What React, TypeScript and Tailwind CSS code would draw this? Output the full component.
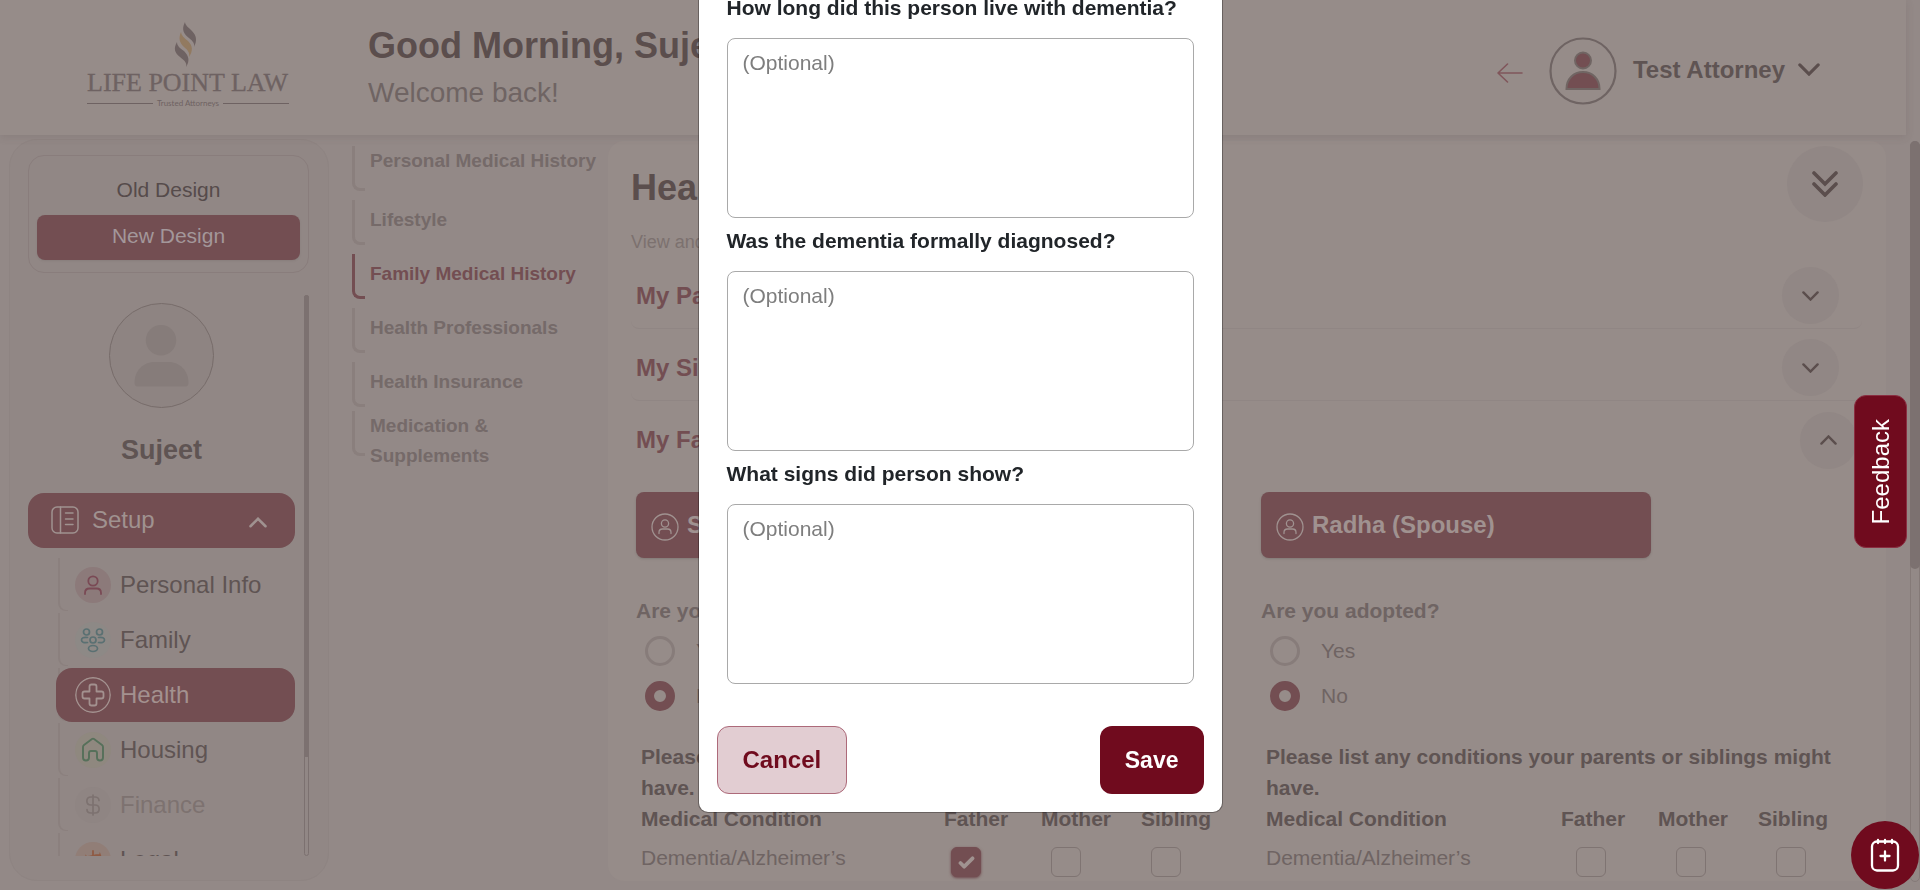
import React from 'react';

type IconProps = { className?: string };

function Chevron({ className = '', up = false }: IconProps & { up?: boolean }) {
  return (
    <svg viewBox="0 0 24 14" fill="none" stroke="currentColor" strokeWidth="3.400" strokeLinecap="round" strokeLinejoin="miter" className={className} aria-hidden="true">
      <path d={up ? 'M2 12 12 2l10 10' : 'M2 2l10 10L22 2'} />
    </svg>
  );
}

function Logo() {
  return (
    <svg viewBox="0 0 208 90" className="h-[90px] w-[208px]" role="img" aria-label="Life Point Law">
      <path d="M98 0c-4 8-1 12 4 16 4 3 6 6 5 9 3-6 3-11-2-16-4-4-7-6-7-9z" fill="#6e6262" />
      <path d="M94 10c-3 7-1 11 3 15 4 3 6 6 5 10 4-6 4-11-1-16-4-3-7-6-7-9z" fill="#927a60" />
      <path d="M90 20c-4 7-2 11 3 15 5 4 7 6 6 10 4-6 3-11-2-16-4-3-7-5-7-9z" fill="#6e6262" />
      <text x="0" y="69" fontFamily="'Liberation Serif', serif" fontSize="26" fill="#6e6262" stroke="#6e6262" strokeWidth="0.300">LIFE POINT LAW</text>
      <path d="M0 81.500H66M136 81.500H202" stroke="#6e6262" strokeWidth="1.200" />
      <text x="101" y="84" textAnchor="middle" fontFamily="Lato, sans-serif" fontSize="8" fill="#6e6262">Trusted Attorneys</text>
    </svg>
  );
}

function PersonIcon({ className = '' }: IconProps) {
  return (
    <svg viewBox="0 0 36 36" fill="none" stroke="currentColor" strokeWidth="1.800" strokeLinecap="round" className={className} aria-hidden="true">
      <circle cx="18" cy="14" r="4.700" />
      <path d="M10 27v-1c0-3 2-4.500 4.500-4.500h7c2.500 0 4.500 1.500 4.500 4.500v1" />
    </svg>
  );
}

function FamilyIcon({ className = '' }: IconProps) {
  return (
    <svg viewBox="0 0 36 36" fill="none" stroke="currentColor" strokeWidth="1.700" strokeLinecap="round" className={className} aria-hidden="true">
      <circle cx="11.500" cy="10" r="3" />
      <circle cx="24.500" cy="10" r="3" />
      <circle cx="18" cy="18" r="3" />
      <ellipse cx="18" cy="26.500" rx="4.500" ry="3" />
      <path d="M12.500 15.500c-4-.500-6 .500-6 2.500s2 3 6 2.500M23.500 15.500c4-.500 6 .500 6 2.500s-2 3-6 2.500" />
    </svg>
  );
}

function HealthIcon({ className = '' }: IconProps) {
  return (
    <svg viewBox="0 0 36 36" fill="none" stroke="currentColor" strokeWidth="1.400" strokeLinejoin="round" className={className} aria-hidden="true">
      <circle cx="18" cy="18" r="17.200" />
      <path strokeWidth="1.800" d="M16.500 7.500h3q2 0 2 2v5h5q2 0 2 2v3q0 2-2 2h-5v5q0 2-2 2h-3q-2 0-2-2v-5h-5q-2 0-2-2v-3q0-2 2-2h5v-5q0-2 2-2z" />
    </svg>
  );
}

function HousingIcon({ className = '' }: IconProps) {
  return (
    <svg viewBox="0 0 36 36" fill="none" stroke="currentColor" strokeWidth="1.900" strokeLinejoin="round" className={className} aria-hidden="true">
      <path d="M8 15q0-1.200 1-2l8-6q1-.700 2 0l8 6q1 .800 1 2v10.500Q28 28.500 25 28.500q-3 0-3-3V21q0-2-2-2h-4q-2 0-2 2v4.500q0 3-3 3-3 0-3-3z" />
    </svg>
  );
}

function DollarIcon({ className = '' }: IconProps) {
  return (
    <svg viewBox="0 0 36 36" fill="none" stroke="currentColor" strokeWidth="1.700" strokeLinecap="round" className={className} aria-hidden="true">
      <path d="M18 8v20M24 13.500c0-2-2-3.500-4-3.500h-4c-5.500 0-5.500 8 0 8h4c5.500 0 5.500 8 0 8h-4c-2.500 0-4-1.500-4-3.500" />
    </svg>
  );
}

function LegalIcon({ className = '' }: IconProps) {
  return (
    <svg viewBox="0 0 36 36" fill="none" stroke="currentColor" strokeWidth="1.800" strokeLinecap="round" className={className} aria-hidden="true">
      <path d="M18 9v18M11 15c5 0 7-2 14-2M11 15l-2 7h5zM25 13l-2 8h5zM13 28h10" />
    </svg>
  );
}

const menu = [
  { label: 'Personal Info', Icon: PersonIcon, tone: 'bg-[#8c7a7a] text-[#7a4a55]' },
  { label: 'Family', Icon: FamilyIcon, tone: 'bg-[#8d8986] text-[#5a7072]' },
  { label: 'Health', Icon: HealthIcon, tone: 'text-[#a3918f]', active: true },
  { label: 'Housing', Icon: HousingIcon, tone: 'bg-[#8f887f] text-[#56705a]' },
  { label: 'Finance', Icon: DollarIcon, tone: 'bg-[#8f8583] text-[#7d7270]', disabled: true },
  { label: 'Legal', Icon: LegalIcon, tone: 'bg-[#917e77] text-[#8f5a43]' },
];

function Sidebar() {
  return (
    <aside className="flex w-80 shrink-0 flex-col rounded-[28px] border border-[#8e8482] bg-[#918785] px-[18px] pt-[15px] pb-6">
      <div className="flex w-[281px] shrink-0 flex-col rounded-2xl border border-[#897d7c] p-2 pb-3 text-[21px]">
        <button className="mt-1.5 flex h-10 items-center justify-center text-[#564b4b]">Old Design</button>
        <button className="mt-[5px] flex h-[45px] items-center justify-center rounded-lg bg-[#734e52] pb-1 text-[#a3979a] shadow-sm shadow-black/5">New Design</button>
      </div>

      <div className="mt-[22px] flex min-h-0 flex-1 justify-between overflow-hidden">
        <div className="flex w-[267px] flex-col">
          <div className="mt-2 ml-[81px] size-[105px] shrink-0 overflow-hidden rounded-full border border-[#776c6a] bg-[#8e8482]">
            <svg viewBox="0 0 105 105" fill="#867c7a" role="img" aria-label="Profile photo">
              <circle cx="52" cy="37" r="15.500" />
              <path d="M25 80c0-12 9-21 20-21h15c11 0 20 9 20 21 0 3-1 4-3 4H28c-2 0-3-1-3-4z" />
            </svg>
          </div>
          <h2 className="mt-6 text-center text-[27px] leading-9 font-bold text-[#5f5453]">Sujeet</h2>
          <button className="mt-[25px] flex h-[55px] shrink-0 items-center rounded-2xl bg-[#734e52] pr-7 pb-0.5 pl-[23px] text-2xl text-[#a09290]">
            <svg viewBox="0 0 28 28" fill="none" stroke="currentColor" strokeWidth="1.500" strokeLinecap="round" className="size-7" aria-hidden="true">
              <rect x="1" y="1" width="26" height="26" rx="5" />
              <path d="M9.500 1v26M14.500 7H22M14.500 13H22M14.500 18.500H22" />
            </svg>
            <span className="ml-[13px]">Setup</span>
            <Chevron up className="mt-1.5 ml-auto h-[11px] w-[18px]" />
          </button>
          <ul className="mt-2.5 flex flex-col gap-px pl-7">
            {menu.map(({ label, Icon, tone, active, disabled }) => (
              <li key={label} className="relative h-[54px] shrink-0">
                <span className="absolute top-0 left-[2px] h-[53px] w-2.5 rounded-bl-lg border-b border-l-2 border-[#8b807e]" />
                <a
                  href="#"
                  className={`relative flex h-full items-center gap-[9px] rounded-2xl pl-[19px] text-2xl ${
                    active ? 'bg-[#734e52] text-[#a3918f]' : disabled ? 'text-[#7d7270]' : 'text-[#5f5453]'
                  }`}
                >
                  <Icon className={`size-9 rounded-full ${tone}`} />
                  {label}
                </a>
              </li>
            ))}
          </ul>
        </div>
        <div className="mr-px w-[5px] rounded-full border border-[#7c7170] bg-[#918785]">
          <div className="-m-px h-[462px] w-[5px] rounded-t-full bg-[#7c7170]" />
        </div>
      </div>
    </aside>
  );
}

const subNav = [
  { label: 'Personal Medical History', row: 'h-[54px]' },
  { label: 'Lifestyle', row: 'h-[54px] pt-[5px]' },
  { label: 'Family Medical History', row: 'h-[54px] pt-[5px]', active: true },
  { label: 'Health Professionals', row: 'h-[54px] pt-[5px]' },
  { label: 'Health Insurance', row: 'h-[49px] pt-[5px]' },
  { label: 'Medication & Supplements', row: 'h-[60px]' },
];

function SubNav() {
  return (
    <nav className="w-[256px] shrink-0 pt-[5px]">
      {subNav.map(({ label, row, active }) => (
        <a
          key={label}
          href="#"
          className={`relative block pl-[18px] text-[19px] leading-[30px] font-bold ${row} ${active ? 'text-[#734e52]' : 'text-[#756a69]'}`}
        >
          <span className={`absolute top-0 left-0 h-[45px] w-[13px] rounded-bl-lg border-b-3 border-l-3 ${active ? 'border-[#734e52]' : 'border-[#8a7f7d]'}`} />
          {label}
        </a>
      ))}
    </nav>
  );
}

function ConditionCard({ name, id, father, headPad }: { name: string; id: string; father: boolean; headPad: string }) {
  return (
    <div className="w-[625px] shrink-0">
      <div className="flex h-[66px] w-[390px] items-center rounded-lg bg-[#734e52] pl-[15px] text-2xl font-bold text-[#a09290] shadow-sm shadow-black/10">
        <svg viewBox="0 0 28 28" fill="none" stroke="currentColor" strokeWidth="1.300" strokeLinecap="round" className="mt-1 size-7" aria-hidden="true">
          <circle cx="14" cy="14" r="13" />
          <circle cx="14" cy="10.500" r="3.600" />
          <path d="M8 20.500v-1c0-2 1-3.500 3.500-3.500h5c2.500 0 3.500 1.500 3.500 3.500v1" />
        </svg>
        <span className="ml-2">{name}</span>
      </div>
      <fieldset className="mt-[37px] text-[21px] text-[#6f6463]">
        <legend className="float-left w-full leading-8 font-bold">Are you adopted?</legend>
        <div className="clear-both flex flex-col gap-[15px] pt-[9px] pl-[9px]">
          {['Yes', 'No'].map((v) => (
            <label key={v} className="flex h-[30px] items-center gap-[21px]">
              <input
                type="radio"
                name={id}
                defaultChecked={v === 'No'}
                className="size-[30px] appearance-none rounded-full border-3 border-[#877c7a] checked:border-[9px] checked:border-[#734e52]"
              />
              <span>{v}</span>
            </label>
          ))}
        </div>
      </fieldset>
      <div className="mt-[30px] ml-[5px] text-[21px] text-[#5f5453]">
        <p className="w-[580px] leading-[31px] font-bold">Please list any conditions your parents or siblings might have.</p>
        <table className="w-[585px] table-fixed border-collapse">
          <thead>
            <tr className="h-8 leading-8">
              <th className="text-left">Medical Condition</th>
              {['Father', 'Mother', 'Sibling'].map((who) => (
                <th key={who} className={`w-[100px] ${headPad}`}>{who}</th>
              ))}
            </tr>
          </thead>
          <tbody>
            <tr className="text-[#6f6463]">
              <td className="h-[46px] leading-[46px]">Dementia/Alzheimer’s</td>
              {['Father', 'Mother', 'Sibling'].map((who) => {
                const on = father && who === 'Father';
                return (
                  <td key={who} className="pt-2 pr-5">
                    <label className={`mx-auto grid size-[30px] place-items-center rounded-md border ${on ? 'border-[#734e52] bg-[#734e52] shadow-sm shadow-[#734e52]' : 'border-[#7f7472]'}`}>
                      <input type="checkbox" defaultChecked={on} aria-label={`${name} ${who}`} className="col-start-1 row-start-1 size-7 appearance-none" />
                      {on && (
                        <svg viewBox="0 0 18 14" fill="none" stroke="#a09290" strokeWidth="4" strokeLinecap="round" strokeLinejoin="round" className="col-start-1 row-start-1 h-[13px] w-[17px]" aria-hidden="true">
                          <path d="M2.500 7.500 6.500 11.500 15.500 2.500" />
                        </svg>
                      )}
                    </label>
                  </td>
                );
              })}
            </tr>
          </tbody>
        </table>
      </div>
    </div>
  );
}

function Content() {
  return (
    <main className="min-w-0 flex-1 rounded-2xl bg-[#968c89] pl-[23px]">
      <div className="flex items-start justify-between pt-[5px] pr-[23px]">
        <div>
          <h1 className="mt-5 text-4xl leading-[44px] font-bold text-[#5b4e4d]">Health</h1>
          <p className="mt-[18px] text-lg text-[#7c716f]">View and edit</p>
        </div>
        <button aria-label="Expand all" className="grid size-[76px] place-items-center rounded-full bg-[#918785] text-[#5b4e4d]">
          <svg viewBox="0 0 26 26" fill="none" stroke="currentColor" strokeWidth="3.600" strokeLinecap="round" className="size-[26px]" aria-hidden="true">
            <path d="M2 2l11 11L24 2M2 13l11 11 11-11" />
          </svg>
        </button>
      </div>
      <div className="mt-px mr-6">
        {['My Parents', 'My Siblings', 'My Family'].map((title, i) => (
          <div
            key={title}
            className={`flex h-[72px] items-center justify-between rounded-lg pt-1.5 pl-[5px] ${i < 2 ? 'border-b border-[#908684] pr-[23px]' : 'pr-[5px]'}`}
          >
            <h3 className="text-2xl font-bold text-[#734e52]">{title}</h3>
            <button aria-label={`Toggle ${title}`} className="grid size-[57px] place-items-center rounded-full bg-[#918785] text-[#5b4e4d]">
              <Chevron up={i === 2} className="h-2.5 w-[17px]" />
            </button>
          </div>
        ))}
      </div>
      <div className="mt-[19px] flex overflow-hidden pl-[5px]">
        <ConditionCard name="Sujeet" id="adopted-self" father headPad="pr-0" />
        <ConditionCard name="Radha (Spouse)" id="adopted-spouse" father={false} headPad="pr-4" />
      </div>
    </main>
  );
}

const questions = [
  'How long did this person live with dementia?',
  'Was the dementia formally diagnosed?',
  'What signs did person show?',
];

function Modal() {
  return (
    <div className="fixed inset-x-0 top-0 z-20 flex justify-center">
      <div role="dialog" aria-modal="true" aria-label="Dementia details" className="-mt-4 w-[525px] rounded-[10px] border border-black/30 bg-white bg-clip-padding">
        <div className="px-7">
          {questions.map((q, i) => (
            <div key={q} className="flex flex-col pt-[7px]">
              <label htmlFor={`q${i}`} className="text-[21px] leading-8 font-bold text-[#212529]">{q}</label>
              <textarea
                id={`q${i}`}
                placeholder="(Optional)"
                className="mt-3.5 block h-[180px] w-full resize-none rounded-lg border border-[#a9a9a9] px-[15px] py-2 text-[21px] leading-8 placeholder:text-[#7e7e7e]"
              />
            </div>
          ))}
        </div>
        <div className="mt-[42px] flex justify-between px-[18px] pb-[18px]">
          <button className="h-[68px] rounded-xl border border-[#ad6a7a] bg-[#e2cdd2] px-[25px] text-2xl font-bold text-[#700b1e]">Cancel</button>
          <button className="h-[68px] rounded-xl bg-[#700b1e] px-[25px] text-[23px] font-bold text-white">Save</button>
        </div>
      </div>
    </div>
  );
}

export default function App() {
  return (
    <div className="relative flex h-screen flex-col overflow-hidden bg-[#938987] font-['Liberation_Sans',Arial,sans-serif]">
      <header className="relative z-10 mr-3.5 flex h-[135px] shrink-0 items-center bg-[#968c89] shadow-[0_2px_8px_rgba(80,65,65,0.15)]">
        <div className="ml-[87px] pb-0.5">
          <Logo />
        </div>
        <div className="ml-[73px]">
          <p className="text-4xl leading-[50px] font-bold text-[#5b4e4d]">Good Morning, Sujeet</p>
          <p className="text-[28px] leading-[44px] text-[#6f6463]">Welcome back!</p>
        </div>
        <div className="mr-[86px] ml-auto flex items-center pt-1.5">
          <a href="#" aria-label="Back" className="mt-1 mr-[26px]">
            <svg viewBox="0 0 26 20" fill="none" stroke="#80565b" strokeWidth="1.600" strokeLinecap="round" strokeLinejoin="round" className="h-5 w-[26px]">
              <path d="M25 10H1M10.500 1 1 10l9.500 9" />
            </svg>
          </a>
          <svg viewBox="0 0 68 68" className="size-[68px]" role="img" aria-label="Account">
            <circle cx="34" cy="34" r="32.500" fill="none" stroke="#6f6463" strokeWidth="2.200" />
            <circle cx="34" cy="23.500" r="8" fill="#734e52" stroke="#706563" strokeWidth="2" />
            <path d="M17.500 52c0-10 7-17 16.500-17s16.500 7 16.500 17z" fill="#734e52" stroke="#706563" strokeWidth="2" />
          </svg>
          <button className="ml-4 flex items-center gap-[13px] pb-0.5 text-2xl font-bold text-[#5f5453]">
            Test Attorney
            <Chevron className="h-[13px] w-[22px] text-[#5b4e4d]" />
          </button>
        </div>
      </header>

      <div className="flex min-h-0 flex-1">
        <div className="flex flex-1 pt-1 pb-[9px] pl-[9px]">
          <Sidebar />
          <div className="flex min-w-0 flex-1 overflow-hidden pt-0.5 pl-[23px]">
            <SubNav />
            <Content />
            <div className="w-6 shrink-0" />
          </div>
        </div>
        <div className="mt-1.5 mb-2 w-2.5 rounded-lg border border-[#857a78]">
          <div className="-m-px h-[428px] w-2.5 rounded-lg bg-[#7c7170]" />
        </div>
      </div>

      <Modal />

      <button className="fixed top-[395px] right-[13px] z-30 flex h-[153px] w-[53px] items-center justify-center rounded-xl border border-[#8a2f42] bg-[#700b1e] text-white">
        <span className="rotate-180 text-2xl font-medium [writing-mode:vertical-rl]">Feedback</span>
      </button>
      <button aria-label="Add note" className="fixed right-px bottom-px z-30 grid size-[68px] place-items-center rounded-full bg-[#700b1e] text-white">
        <svg viewBox="0 0 30 34" fill="none" stroke="currentColor" strokeWidth="2.300" strokeLinecap="round" className="h-[34px] w-[30px]" aria-hidden="true">
          <rect x="2" y="3.500" width="26" height="29" rx="5" />
          <path d="M8 2v3M15 2v3M22 2v3M15 13.500v9M10.500 18h9" />
        </svg>
      </button>
    </div>
  );
}
